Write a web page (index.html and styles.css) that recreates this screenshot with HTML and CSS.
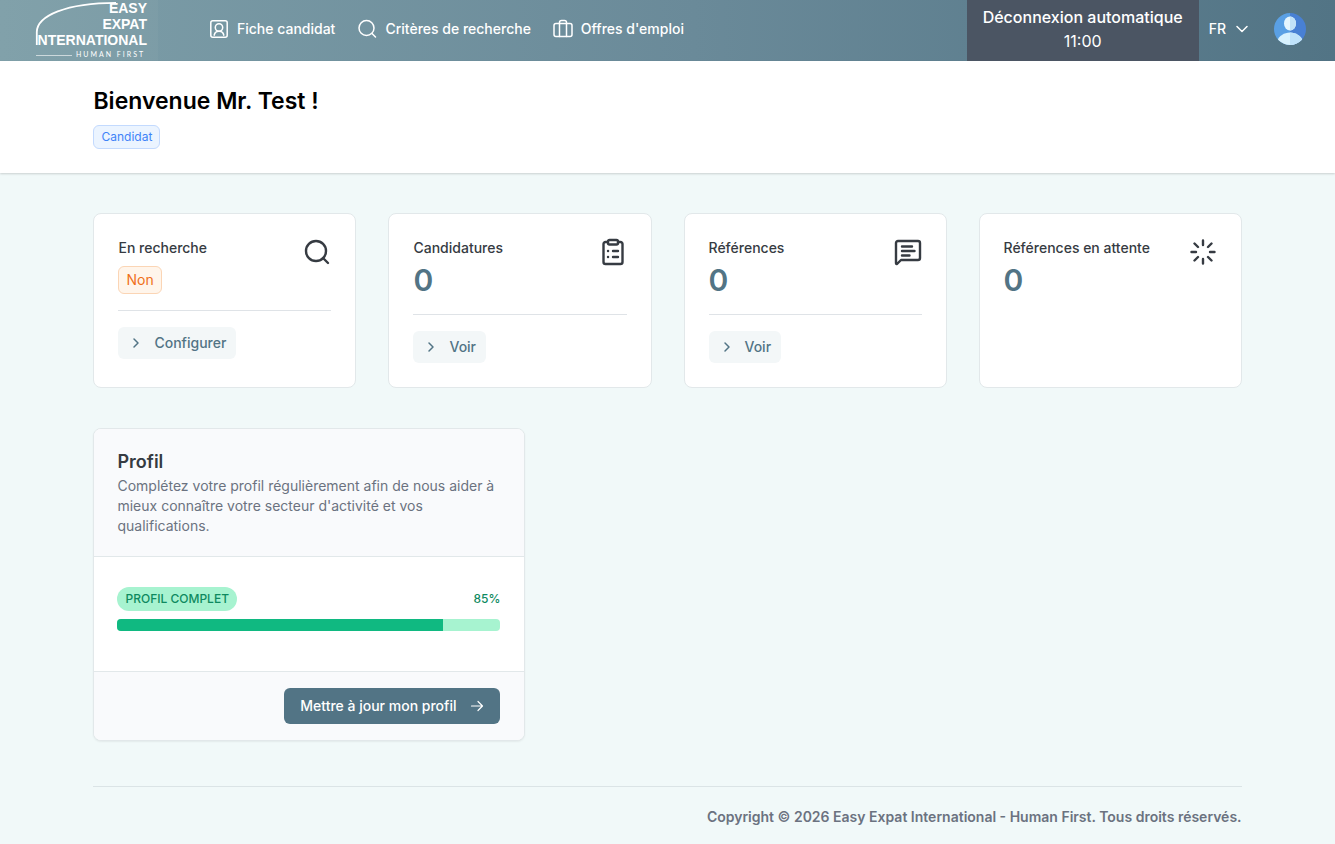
FILE: index.html
```html
<!DOCTYPE html>
<html lang="fr">
<head>
  <meta charset="UTF-8" />
  <meta name="viewport" content="width=device-width, initial-scale=1" />
  <title>Easy Expat International</title>
  <link rel="stylesheet" href="styles.css">
</head>
<body>
  <header class="topbar">
    <a class="logo" href="#" aria-label="Easy Expat International">
      <svg width="158" height="61" viewBox="0 0 158 61">
        <path d="M36.800 45V32C37 16 66 2.800 116 2.800" fill="none" stroke="#fff" stroke-width="1.800" />
        <g class="logo-name" text-anchor="end">
          <text x="147" y="13">EASY</text>
          <text x="147" y="29">EXPAT</text>
          <text x="147" y="45">NTERNATIONAL</text>
        </g>
        <path d="M36 55.500h36" stroke="#fff" stroke-width="1" opacity=".6" />
        <text class="logo-tag" x="76" y="57">HUMAN FIRST</text>
      </svg>
    </a>
    <nav class="nav">
      <a href="#">
        <svg class="icon" width="20" height="20" viewBox="0 0 20 20">
          <rect x="1.800" y="1.800" width="16.400" height="16.400" rx="2" />
          <circle cx="10" cy="8.500" r="3.700" />
          <path d="M5.200 16.200c.4-2.500 2.200-4 4.800-4s4.400 1.500 4.800 4" />
        </svg>
        Fiche candidat
      </a>
      <a href="#">
        <svg class="icon" width="20" height="20" viewBox="0 0 20 20">
          <circle cx="9.500" cy="9" r="7.500" />
          <path d="M15 14.500l3.500 3.500" />
        </svg>
        Critères de recherche
      </a>
      <a href="#">
        <svg class="icon" width="20" height="20" viewBox="0 0 20 20">
          <rect x="1" y="4.500" width="18" height="13" rx="2" />
          <path d="M6.500 17.500V3.500a2 2 0 0 1 2-2h3a2 2 0 0 1 2 2v14" />
        </svg>
        Offres d'emploi
      </a>
    </nav>
    <div class="timeout">
      <strong>Déconnexion automatique</strong>
      <span>11:00</span>
    </div>
    <button class="lang" type="button">
      FR
      <svg class="icon" width="12" height="8" viewBox="0 0 12 8"><path d="M1 1.500l5 5 5-5" /></svg>
    </button>
    <button class="avatar" type="button" aria-label="Mon compte">
      <svg width="32" height="32" viewBox="0 0 32 32">
        <clipPath id="disc"><circle cx="16" cy="16" r="16" /></clipPath>
        <g clip-path="url(#disc)">
          <path fill="#5aa0e4" d="M0 0h16v32H0z" />
          <path fill="#4880d4" d="M16 0h16v32H16z" />
          <ellipse cx="16" cy="10.500" rx="6" ry="7" fill="#e6f6fe" />
          <path fill="#c2e2f8" d="M16 3.500a6 7 0 0 1 0 14z" />
          <path fill="#d8f2fe" d="M3 28c2-5 7-8.500 13-8.500s11 3.500 13 8.500l-4 5H7z" />
          <path fill="#bfe2fa" d="M16 19.500c6 0 11 3.500 13 8.500l-4 5h-9z" />
        </g>
      </svg>
    </button>
  </header>

  <section class="welcome">
    <div class="container">
      <h1>Bienvenue Mr. Test !</h1>
      <span class="tag tag-blue">Candidat</span>
    </div>
  </section>

  <main class="container">
    <div class="stats">
      <article class="card">
        <div class="card-head">
          <div>
            <h2>En recherche</h2>
            <span class="tag tag-orange">Non</span>
          </div>
          <svg class="icon" width="28" height="28" viewBox="0 0 28 28">
            <circle cx="13" cy="13" r="10" />
            <path d="M20 20l5 5" />
          </svg>
        </div>
        <div class="card-foot">
          <a class="more" href="#">
            <svg class="icon" width="12" height="12" viewBox="0 0 12 12"><path d="M4 2l4 4-4 4" /></svg>
            Configurer
          </a>
        </div>
      </article>

      <article class="card">
        <div class="card-head">
          <div>
            <h2>Candidatures</h2>
            <p class="count">0</p>
          </div>
          <svg class="icon" width="28" height="28" viewBox="0 0 28 28">
            <path d="M9 4H6.500a2 2 0 0 0-2 2v18a2 2 0 0 0 2 2h15a2 2 0 0 0 2-2V6a2 2 0 0 0-2-2H19" />
            <rect x="9" y="2" width="10" height="4.500" rx="1.500" />
            <path d="M9 13h.1M9 19h.1M14 13H19M14 19H19" />
          </svg>
        </div>
        <div class="card-foot">
          <a class="more" href="#">
            <svg class="icon" width="12" height="12" viewBox="0 0 12 12"><path d="M4 2l4 4-4 4" /></svg>
            Voir
          </a>
        </div>
      </article>

      <article class="card">
        <div class="card-head">
          <div>
            <h2>Références</h2>
            <p class="count">0</p>
          </div>
          <svg class="icon" width="28" height="28" viewBox="0 0 28 28">
            <path d="M2 25V5a2 2 0 0 1 2-2h20a2 2 0 0 1 2 2v15a2 2 0 0 1-2 2H7l-4 4q-1 .5-1-1z" />
            <path d="M8 8.500h10M8 13h12.500M8 17.500h7.500" />
          </svg>
        </div>
        <div class="card-foot">
          <a class="more" href="#">
            <svg class="icon" width="12" height="12" viewBox="0 0 12 12"><path d="M4 2l4 4-4 4" /></svg>
            Voir
          </a>
        </div>
      </article>

      <article class="card">
        <div class="card-head">
          <div>
            <h2>Références en attente</h2>
            <p class="count">0</p>
          </div>
          <svg class="icon" width="28" height="28" viewBox="0 0 28 28">
            <path d="M14 2.500v4.500M14 21v4.500M2.500 14H7M21 14h4.500M5.500 5.500l3.500 3.500M19 19l3.500 3.500M5.500 22.500L9 19M19 9l3.500-3.500" />
          </svg>
        </div>
      </article>
    </div>

    <section class="profile">
      <div class="profile-head">
        <h2>Profil</h2>
        <p>Complétez votre profil régulièrement afin de nous aider à mieux connaître votre secteur d'activité et vos qualifications.</p>
      </div>
      <div class="profile-body">
        <div class="progress-label">
          <span class="pill">Profil complet</span>
          <span class="percent">85%</span>
        </div>
        <div class="progress" role="progressbar" aria-valuenow="85" aria-valuemin="0" aria-valuemax="100" aria-label="Profil complet">
          <div class="progress-bar" style="width: 85%"></div>
        </div>
      </div>
      <div class="profile-foot">
        <a class="btn" href="#">
          Mettre à jour mon profil
          <svg class="icon" width="14" height="14" viewBox="0 0 14 14"><path d="M1.500 7h11M8 2.500L12.500 7 8 11.500" /></svg>
        </a>
      </div>
    </section>

    <footer class="footer">Copyright © 2026 Easy Expat International - Human First. Tous droits réservés.</footer>
  </main>
</body>
</html>
```

FILE: styles.css
```css
* {
  box-sizing: border-box;
}
body {
  margin: 0;
  background: #f1f9f9;
  color: #363b42;
  font-family: Inter, sans-serif;
  font-size: 14px;
  line-height: 20px;
}
h1, h2, p {
  margin: 0;
}
a {
  color: inherit;
  text-decoration: none;
}
button {
  padding: 0;
  border: none;
  background: none;
  color: inherit;
  font: inherit;
  cursor: pointer;
}
svg {
  display: block;
  flex: none;
}
.icon {
  fill: none;
  stroke: currentColor;
  stroke-width: 1.5;
  stroke-linecap: round;
  stroke-linejoin: round;
}
.container {
  width: 86%;
  margin: 0 auto;
}

/* top bar */
.topbar {
  display: flex;
  align-items: stretch;
  height: 61px;
  background: linear-gradient(to right, #7d9ea8, #6a8a99 52%, #527485);
  color: #fff;
}
.logo {
  background: rgba(255, 255, 255, 0.03);
}
.logo-name {
  fill: #fff;
  font: bold 14px "Liberation Sans", Arial, sans-serif;
}
.logo-tag {
  fill: #fff;
  font: 7px Lato, sans-serif;
  letter-spacing: 2px;
}
.nav {
  display: flex;
  align-items: center;
  gap: 22px;
  margin-left: 51px;
  padding-bottom: 3px;
  font-weight: 500;
}
.nav a {
  display: flex;
  align-items: center;
  gap: 8px;
}
.timeout {
  display: flex;
  flex-direction: column;
  align-items: center;
  margin-left: auto;
  padding: 5px 16px;
  background: #4b5563;
  font-size: 16px;
  line-height: 24px;
}
.timeout strong {
  font-weight: 500;
}
.lang {
  display: flex;
  align-items: center;
  gap: 10px;
  padding: 0 0 3px 10px;
  font-weight: 500;
}
.avatar {
  margin: 0 29px 0 26px;
  padding-bottom: 3px;
}

/* page title */
.welcome {
  padding: 24px 0;
  background: #fff;
  box-shadow: 0 1px 2px rgba(0, 0, 0, 0.16);
}
.welcome h1 {
  margin-bottom: 7px;
  color: #000;
  font-size: 23px;
  font-weight: 600;
  line-height: 33px;
}
.tag {
  display: table;
  padding: 1px 7px;
  border: 1px solid;
  border-radius: 6px;
}
.tag-blue {
  border-color: #c3dafe;
  background: #ebf4ff;
  color: #3f83f8;
  font-size: 12px;
}
.tag-orange {
  margin-top: 8px;
  padding: 3px 7px;
  border-color: #fbd5b5;
  background: #fff5eb;
  color: #f0701a;
}

/* stat cards */
.stats {
  display: grid;
  grid-template-columns: repeat(4, 1fr);
  gap: 32px;
  padding-top: 40px;
}
.card {
  min-height: 175px;
  padding: 24px;
  border: 1px solid #e2e8ea;
  border-radius: 8px;
  background: #fff;
}
.card-head {
  display: flex;
  justify-content: space-between;
}
.card-head .icon {
  stroke-width: 2.4;
}
.card h2 {
  font-size: 14px;
  font-weight: 500;
}
.count {
  margin-top: 4px;
  color: #527485;
  font-size: 30px;
  font-weight: 600;
  line-height: 36px;
}
.card-foot {
  margin-top: 16px;
  padding-top: 16px;
  border-top: 1px solid #dfe3e7;
}
.more {
  display: inline-flex;
  align-items: center;
  gap: 12px;
  padding: 6px 10px 6px 12px;
  border-radius: 6px;
  background: #f3f7f8;
  color: #527485;
  font-weight: 500;
}

/* profile */
.profile {
  max-width: 432px;
  margin-top: 40px;
  border: 1px solid #e2e8ea;
  border-radius: 8px;
  background: #fff;
  box-shadow: 0 1px 2px rgba(0, 0, 0, 0.06);
  overflow: hidden;
}
.profile-head {
  padding: 19px 23px 20px;
  border-bottom: 1px solid #e2e8ea;
  background: #f9fafc;
  color: #6b7280;
}
.profile-head h2 {
  margin-bottom: 1px;
  color: #363b42;
  font-size: 18px;
  font-weight: 600;
  line-height: 27px;
}
.profile-body {
  padding: 30px 24px 40px 23px;
}
.progress-label {
  display: flex;
  align-items: center;
  justify-content: space-between;
  margin-bottom: 8px;
  color: #0e8a5f;
  font-size: 12px;
  font-weight: 500;
}
.pill {
  padding: 2px 8px;
  border-radius: 12px;
  background: #a7f3d0;
  text-transform: uppercase;
}
.progress {
  height: 12px;
  border-radius: 4px;
  background: #a7f3d0;
  overflow: hidden;
}
.progress-bar {
  height: 100%;
  background: #10b981;
}
.profile-foot {
  display: flex;
  justify-content: flex-end;
  padding: 16px 24px;
  border-top: 1px solid #e2e8ea;
  background: #f9fafc;
}
.btn {
  display: flex;
  align-items: center;
  gap: 14px;
  padding: 8px 16px;
  border-radius: 6px;
  background: #527485;
  color: #fff;
  font-weight: 500;
}
.btn .icon {
  stroke-width: 1.2;
}

.footer {
  margin-top: 45px;
  padding: 20px 0;
  border-top: 1px solid #dbe4e6;
  color: #6b7280;
  font-weight: 600;
  text-align: right;
}
```
